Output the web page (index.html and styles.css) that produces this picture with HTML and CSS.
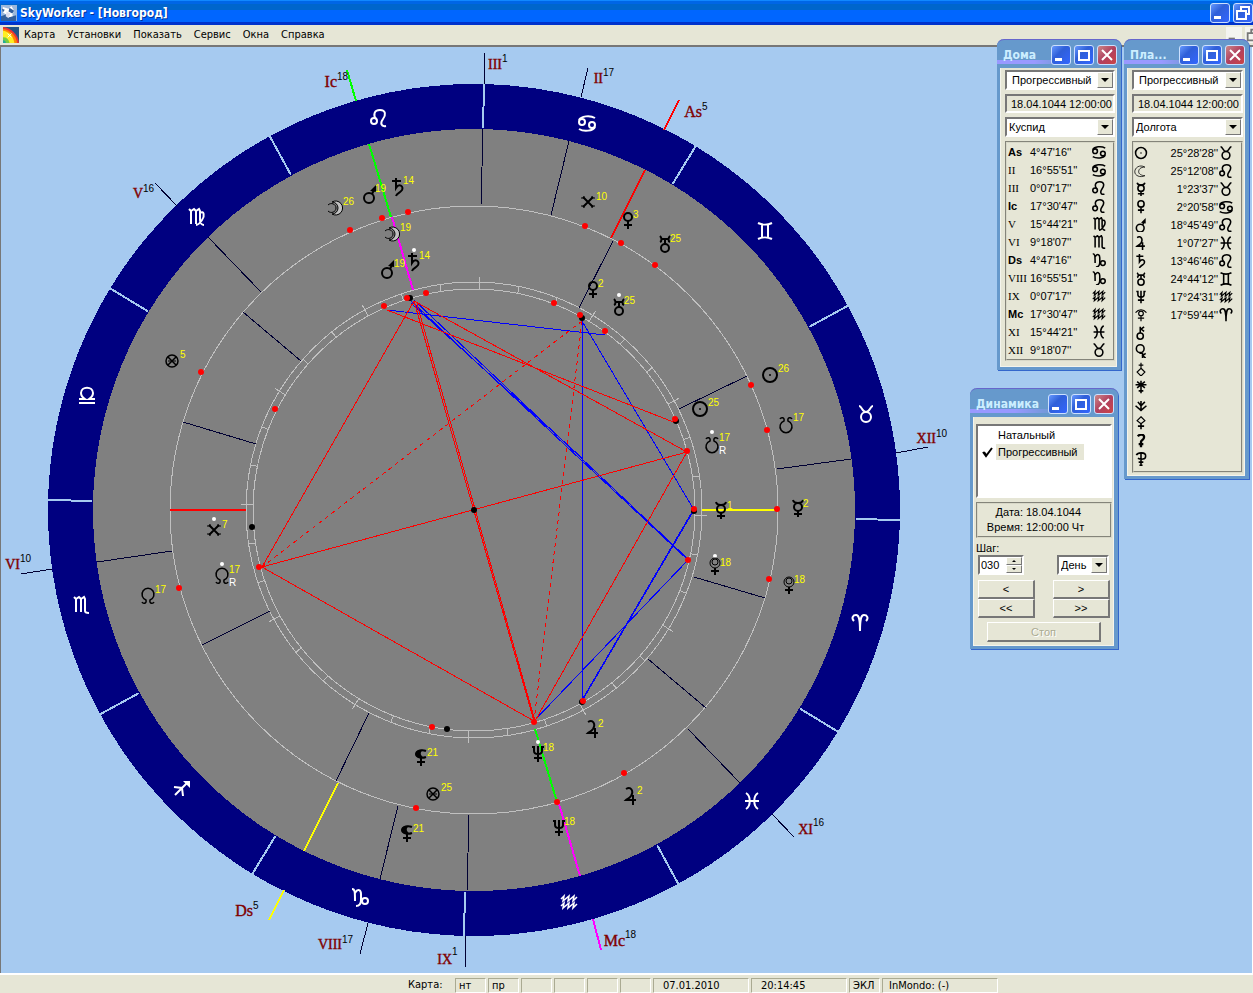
FILE: index.html
```html
<!DOCTYPE html>
<html lang="ru">
<head>
<meta charset="utf-8">
<title>SkyWorker - [Новгород]</title>
<link rel="stylesheet" href="styles.css">
</head>
<body>
<svg class="sprite" aria-hidden="true">
<defs>
<g id="aries"><path d="M-6-2C-9-5-7-8-4-8-1-8 0-4 0 8 0-4 1-8 4-8 7-8 9-5 6-2"/></g>
<g id="taurus"><circle cy="3" r="5"/><path d="M-7-8C-4-8-4-2 0-2S4-8 7-8"/></g>
<g id="gemini"><path d="M-7-8C-3-6 3-6 7-8M-7 8C-3 6 3 6 7 8M-3-7V7M3-7V7"/></g>
<g id="cancer"><circle cx="-5" cy="-1" r="3"/><circle cx="5" cy="2" r="3"/><path d="M-8-3C-6-7 3-8 8-5M8 4C6 8-3 9-8 6"/></g>
<g id="leo"><circle cx="-5" cy="3" r="3"/><path d="M-3 1C-6-3-5-8 1-8S7-3 4 1 2 9 7 8"/></g>
<g id="virgo"><path d="M-7-8l2 2V7M-5-6l3-2 2 2V7M0-6l3-2 1 2V3C4 6 6 8 8 8M4-4C8-7 9-1 6 3 4 6 2 8 0 8"/></g>
<g id="libra"><path d="M-8 8H8M-8 4H-2C-5 2-6 0-6-2-6-9 6-9 6-2 6 0 5 2 2 4H8"/></g>
<g id="scorpio"><path d="M-7-8l2 2V7M-5-6l3-2 2 2V7M0-6l3-2 1 2V6C4 8 6 8 8 8"/></g>
<g id="sagittarius"><path d="M-7 7L6-6M-8-1L0 0L1 8"/><path class="solid" d="M1-7H8V0z"/></g>
<g id="capricorn"><path d="M-8-8C-5-8-5-5-5 4M-5-4C-2-9 1-7 1-3V3C1 8-2 9-4 9"/><circle cx="5" cy="4" r="3"/></g>
<g id="aquarius"><path class="medium" d="M-8-3L-5-6L-6-1L0-6L-1-1L5-6L4-1L8-5M-8 4L-5 1L-6 6L0 1L-1 6L5 1L4 6L8 2"/></g>
<g id="pisces"><path d="M-6-8C-1-5-1 5-6 8M6-8C1-5 1 5 6 8M-7 0H7"/></g>
<g id="sun"><circle r="7"/><circle class="solid" r="1"/></g>
<g id="moon"><path class="crescent" d="M-3-6A7 7 0 1 1-3 6 6 6 0 0 0-3-6z"/><path class="thin" d="M-7-3C-4-6 1-4 1 0S-4 6-7 3"/></g>
<g id="moon-left"><path class="thin" d="M5-5C-2-9-8-4-8 1S-1 9 5 6M5-5C-1-5-3-2-3 1S1 6 5 6"/></g>
<g id="mercury"><circle cy="-1" r="4"/><path d="M-5-8C-4-4 4-4 5-8M0 3V9M-4 6H4"/></g>
<g id="venus"><circle cy="-4" r="4"/><path d="M0 0V8M-4 4H4"/></g>
<g id="mars"><circle cx="-1" cy="4" r="5"/><path d="M2 0L4-4"/><path class="solid" d="M6-9V-2L0-3z"/></g>
<g id="jupiter"><path d="M-5-7C0-10 3-5 0 0-2 3-4 3-5 4H5M2-1V9"/></g>
<g id="saturn"><path d="M-6-6H3M-2-9V1C1-4 6-1 4 3 2 6-1 6-2 9"/></g>
<g id="uranus"><circle cy="4" r="4"/><path d="M0 0V-6M-5-8C-3-6-3-3-5-2M5-8C3-6 3-3 5-2M-4-5H4"/></g>
<g id="neptune"><path d="M-4-8V-3C-4 1 4 1 4-3V-8M0-8V8M-4 4H4M-6-7h3M3-7h3"/></g>
<g id="pluto"><circle class="thin" cy="-3" r="5"/><circle class="thin" cy="-4" r="3"/><path d="M0 2V9M-4 5H4"/></g>
<g id="pluto-small"><circle class="medium" cy="-2" r="3"/><path class="medium" d="M-7-3C-3-8 3-8 7-3M0 1V8M-4 4H4"/></g>
<g id="north-node"><path class="medium" d="M-6 6C-5 8-1 8-2 4A6 6 0 1 1 2 4C1 8 5 8 6 6"/></g>
<g id="south-node"><path class="medium" d="M-6-6C-5-8-1-8-2-4A6 6 0 1 0 2-4C1-8 5-8 6-6"/></g>
<g id="cross"><path d="M-5-5L5 5M5-5L-5 5"/><path class="thin" d="M-7-4H-4V-6M7-4H4V-6M-7 4H-4V6M7 4H4V6"/></g>
<g id="fortune"><circle class="medium" r="6"/><path class="medium" d="M-4-4L4 4M4-4L-4 4"/><path class="thin" d="M-4 0H4"/></g>
<g id="lilith"><path d="M5-7C0-9-5-7-5-4S0 1 5-1"/><path class="solid" d="M2-8C-3-9-6-6-5-3S-1 1 2-1C-1-3-1-6 2-8z"/><path d="M0 0V8M-4 4H4"/></g>
<g id="chiron"><circle cx="-1" cy="4" r="4"/><path d="M-1 0V-8M4-8L0-5L4-2"/></g>
<g id="proserpina"><circle cx="-1" cy="-3" r="5"/><path d="M-2 3H2V9M6 3L2 6L6 9"/></g>
<g id="vulcan"><path class="medium" d="M0-1L5 4L0 9L-5 4zM0-1V-8M-3-5H3"/></g>
<g id="juno"><path d="M-5-7L5 1M5-7L-5 1M-7-3H7M0-8V8M-3 5H3"/></g>
<g id="vesta"><path d="M-7 1L0 7L7 1M-4-4L0 1L5-4M0-5V6"/></g>
<g id="pallas"><path class="medium" d="M0-8L5-3L0 1L-5-3z"/><path d="M0 1V8M-4 4H4"/></g>
<g id="ceres"><path class="heavy" d="M-4-6C-2-9 4-9 4-5S0-1 0 1V8M-3 4H3"/></g>
<g id="isis"><path d="M-6-5C-4-9 6-9 6-4S0 1-4-1M0-7V9M-3 4H3M-2 8H2"/></g>
<g id="min"><path class="solid" d="M-6 3H1V6H-6z"/></g>
<g id="max"><path d="M-5-4H5V5H-5z"/></g>
<g id="close"><path d="M-5-5L5 5M5-5L-5 5"/></g>
<g id="restore"><path d="M-2-2V-6H6V1H3M-6-2H3V6H-6z"/></g>
</defs>
</svg>

<div class="app">
<header class="titlebar">
  <svg class="app-icon" viewBox="0 0 17 17" aria-hidden="true"><path fill="#9cb8dc" d="M0 0h17v17H0z"/><path fill="#fff" d="M2 2l6 2 3-3 3 5-2 4 2 6H6l1-5-5-3z"/><path fill="#335f9c" d="M0 12l5-2 4 3 7-2v6H0zM9 3l5 3-2 3-4-2zM1 4l3 1-2 3z"/><path fill="#dde" d="M6 7l4 2-2 5-3-2z"/></svg>
  <h1>SkyWorker - [Новгород]</h1>
  <div class="app-buttons">
    <button class="cap" aria-label="Свернуть"><svg viewBox="-9 -9 18 18"><use href="#min"/></svg></button>
    <button class="cap" aria-label="Восстановить"><svg viewBox="-9 -9 18 18"><use href="#restore"/></svg></button>
  </div>
</header>
<nav class="menubar">
  <svg class="doc-icon" viewBox="0 0 17 17" aria-hidden="true"><path fill="#258" d="M0 0h17v17H0z"/><path fill="#e33" d="M0 0C9 1 16 8 17 17H0z"/><path fill="#f80" d="M0 2C8 3 14 9 15 17H0z"/><path fill="#fe2" d="M0 4c7 1 11 6 12 13H0z"/><path fill="#7c4" d="M0 11c4 0 6 2 7 6H0z"/><path fill="#2a9" d="M0 14c2 0 3 1 3 3H0z"/><path stroke="#fff" d="M5 7l4 4M9 7l-4 4"/></svg>
  <button>Карта</button><button>Установки</button><button>Показать</button><button>Сервис</button><button>Окна</button><button>Справка</button>
  <div class="doc-buttons">
    <button aria-label="Свернуть документ"><svg viewBox="-9 -9 18 18"><use href="#min"/></svg></button>
    <button aria-label="Восстановить документ"><svg viewBox="-9 -9 18 18"><use href="#restore"/></svg></button>
  </div>
</nav>

<main class="desk">
<svg class="chart" viewBox="0 46 1253 927" role="img" aria-label="Карта: Новгород">
  <defs>
    <path id="sep" d="M474 84V128"/>
    <path id="t" d="M474 282V289"/>
    <g id="t30"><path d="M474 277V289"/><use href="#t" transform="rotate(10 474 510)"/><use href="#t" transform="rotate(20 474 510)"/></g>
  </defs>
  <g class="rings">
    <circle class="zodiac" cx="474" cy="510" r="426"/>
    <circle class="disc" cx="474" cy="510" r="381"/>
    <g class="seps" transform="rotate(1.35 474 510)">
      <use href="#sep"/><use href="#sep" transform="rotate(30 474 510)"/><use href="#sep" transform="rotate(60 474 510)"/><use href="#sep" transform="rotate(90 474 510)"/><use href="#sep" transform="rotate(120 474 510)"/><use href="#sep" transform="rotate(150 474 510)"/><use href="#sep" transform="rotate(180 474 510)"/><use href="#sep" transform="rotate(210 474 510)"/><use href="#sep" transform="rotate(240 474 510)"/><use href="#sep" transform="rotate(270 474 510)"/><use href="#sep" transform="rotate(300 474 510)"/><use href="#sep" transform="rotate(330 474 510)"/>
    </g>
    <g class="scale">
      <circle cx="474" cy="510" r="304"/><circle cx="474" cy="510" r="228"/><circle cx="474" cy="510" r="221"/>
      <g transform="rotate(1.4 474 510)">
        <use href="#t30"/><use href="#t30" transform="rotate(30 474 510)"/><use href="#t30" transform="rotate(60 474 510)"/><use href="#t30" transform="rotate(90 474 510)"/><use href="#t30" transform="rotate(120 474 510)"/><use href="#t30" transform="rotate(150 474 510)"/><use href="#t30" transform="rotate(180 474 510)"/><use href="#t30" transform="rotate(210 474 510)"/><use href="#t30" transform="rotate(240 474 510)"/><use href="#t30" transform="rotate(270 474 510)"/><use href="#t30" transform="rotate(300 474 510)"/><use href="#t30" transform="rotate(330 474 510)"/>
      </g>
    </g>
  </g>
  <g class="cusps">
    <path d="M485 53L484 84M483 129L481 205M588 68L581 97M569 141L551 215M155 183L177 206M208 237L261 292M21 574L52 569M97 562L172 551M368 923L360 954M398 806L380 879M466 936L465 967M469 815L467 891M772 814L794 837M688 729L740 783M896 453L928 447M777 469L851 459M243 312L301 361M183 422L256 444M679 409L747 376M694 577L765 598M648 659L706 708M202 645L270 611M369 713L336 781M579 308L613 241"/>
    <path class="red" d="M664 130L679 100M645 170L611 238M170 510H246"/>
    <path class="yellow" d="M284 890L269 920M338 783L304 851M702 510H778"/>
    <path class="green" d="M347 70L356 101M369 144L391 217M535 729L557 802"/>
    <path class="magenta" d="M593 919L601 950M559 804L580 876M392 217L413 290"/>
  </g>
  <g class="aspects">
    <path class="blue" d="M387 310L605 335M582 321V701M582 321L694 510L582 701M411 301L688 560M414 300L690 561M411 303L582 458M692 512L582 700M688 560L534 721"/>
    <path class="red" d="M262 567L414 301L534 721zM262 567L687 452L414 301M417 304L535 721L687 452M387 310L676 423"/>
    <path class="red dashed" d="M582 321L262 567M582 321L534 721"/>
  </g>
  <g class="dots">
    <g><circle cx="410" cy="298" r="3"/><circle cx="582" cy="318" r="3"/><circle cx="676" cy="421" r="3"/><circle cx="252" cy="527" r="3"/><circle cx="447" cy="729" r="3"/><circle cx="582" cy="702" r="3"/><circle cx="694" cy="511" r="3"/><circle cx="474" cy="510" r="3"/></g>
    <g class="natal"><circle cx="350" cy="230" r="3"/><circle cx="382" cy="218" r="3"/><circle cx="408" cy="212" r="3"/><circle cx="585" cy="226" r="3"/><circle cx="621" cy="243" r="3"/><circle cx="655" cy="265" r="3"/><circle cx="384" cy="306" r="3"/><circle cx="407" cy="298" r="3"/><circle cx="426" cy="293" r="3"/><circle cx="554" cy="303" r="3"/><circle cx="580" cy="315" r="3"/><circle cx="605" cy="331" r="3"/><circle cx="751" cy="385" r="3"/><circle cx="767" cy="430" r="3"/><circle cx="675" cy="419" r="3"/><circle cx="687" cy="451" r="3"/><circle cx="201" cy="372" r="3"/><circle cx="275" cy="409" r="3"/><circle cx="179" cy="588" r="3"/><circle cx="259" cy="567" r="3"/><circle cx="432" cy="727" r="3"/><circle cx="416" cy="808" r="3"/><circle cx="534" cy="722" r="3"/><circle cx="583" cy="701" r="3"/><circle cx="557" cy="802" r="3"/><circle cx="624" cy="773" r="3"/><circle cx="694" cy="509" r="3"/><circle cx="777" cy="509" r="3"/><circle cx="688" cy="560" r="3"/><circle cx="769" cy="579" r="3"/></g>
    <g class="marks"><circle cx="414" cy="250" r="2"/><circle cx="619" cy="295" r="2"/><circle cx="712" cy="432" r="2"/><circle cx="715" cy="556" r="2"/><circle cx="214" cy="519" r="2"/><circle cx="222" cy="564" r="2"/><circle cx="538" cy="742" r="2"/></g>
  </g>
  <g class="signs">
    <use href="#leo" x="379" y="118"/><use href="#cancer" x="587" y="123"/><use href="#gemini" x="765" y="231"/><use href="#taurus" x="866" y="414"/><use href="#aries" x="860" y="623"/><use href="#pisces" x="752" y="801"/><use href="#aquarius" x="569" y="902"/><use href="#capricorn" x="360" y="897"/><use href="#sagittarius" x="182" y="788"/><use href="#scorpio" x="81" y="605"/><use href="#libra" x="87" y="395"/><use href="#virgo" x="196" y="217"/>
  </g>
  <g class="planets">
    <use href="#moon" x="335" y="208"/><use href="#mars" x="370" y="194"/><use href="#saturn" x="398" y="187"/><use href="#cross" x="588" y="202"/><use href="#venus" x="628" y="221"/><use href="#uranus" x="665" y="244"/>
    <use href="#moon" x="392" y="234"/><use href="#saturn" x="414" y="262"/><use href="#mars" x="388" y="269"/><use href="#venus" x="593" y="290"/><use href="#uranus" x="619" y="307"/>
    <use href="#sun" x="770" y="375"/><use href="#sun" x="700" y="409"/><use href="#south-node" x="786" y="425"/><use href="#south-node" x="712" y="445"/>
    <use href="#mercury" x="721" y="510"/><use href="#mercury" x="798" y="508"/><use href="#pluto" x="715" y="566"/><use href="#pluto" x="789" y="585"/>
    <use href="#fortune" x="172" y="361"/><use href="#cross" x="214" y="530"/><use href="#north-node" x="222" y="576"/><use href="#north-node" x="148" y="596"/>
    <use href="#lilith" x="421" y="758"/><use href="#lilith" x="407" y="834"/><use href="#fortune" x="433" y="794"/><use href="#neptune" x="538" y="754"/><use href="#neptune" x="559" y="828"/><use href="#jupiter" x="593" y="729"/><use href="#jupiter" x="631" y="796"/>
  </g>
  <g class="degrees">
    <text x="343" y="205">26</text><text x="375" y="192">19</text><text x="403" y="184">14</text><text x="596" y="200">10</text><text x="633" y="218">3</text><text x="670" y="242">25</text>
    <text x="400" y="231">19</text><text x="419" y="259">14</text><text x="394" y="267">19</text><text x="598" y="287">2</text><text x="624" y="304">25</text>
    <text x="778" y="372">26</text><text x="708" y="406">25</text><text x="793" y="421">17</text><text x="719" y="441">17</text>
    <text x="727" y="509">1</text><text x="803" y="507">2</text><text x="720" y="566">18</text><text x="794" y="583">18</text>
    <text x="180" y="358">5</text><text x="222" y="528">7</text><text x="229" y="573">17</text><text x="155" y="593">17</text>
    <text x="427" y="756">21</text><text x="413" y="832">21</text><text x="441" y="791">25</text><text x="543" y="751">18</text><text x="564" y="825">18</text><text x="598" y="727">2</text><text x="637" y="794">2</text>
    <text class="retro" x="719" y="454">R</text><text class="retro" x="229" y="586">R</text>
  </g>
  <g class="houses">
    <text x="502" y="69">III</text><text x="603" y="83">II</text><text class="axis" x="702" y="117">As</text><text class="axis" x="337" y="87">Ic</text><text x="143" y="198">V</text><text x="20" y="569">VI</text><text x="936" y="443">XII</text><text x="813" y="834">XI</text><text class="axis" x="625" y="946">Mc</text><text x="452" y="964">IX</text><text x="342" y="949">VIII</text><text class="axis" x="253" y="916">Ds</text>
  </g>
  <g class="house-degrees">
    <text x="502" y="62">1</text><text x="603" y="76">17</text><text x="702" y="110">5</text><text x="337" y="80">18</text><text x="143" y="192">16</text><text x="20" y="562">10</text><text x="936" y="437">10</text><text x="813" y="826">16</text><text x="625" y="938">18</text><text x="452" y="955">1</text><text x="342" y="943">17</text><text x="253" y="909">5</text>
  </g>
</svg>

<section class="win win-houses">
  <header><h2>Дома</h2><button class="cap" aria-label="Свернуть"><svg viewBox="-9 -9 18 18"><use href="#min"/></svg></button><button class="cap" aria-label="Развернуть"><svg viewBox="-9 -9 18 18"><use href="#max"/></svg></button><button class="cap cap-close" aria-label="Закрыть"><svg viewBox="-9 -9 18 18"><use href="#close"/></svg></button></header>
  <div class="win-body">
    <div class="combo indent"><select aria-label="Карта домов"><option>Прогрессивный</option><option>Натальный</option></select><i class="arrow"></i></div>
    <div class="stamp">18.04.1044 12:00:00</div>
    <div class="combo"><select aria-label="Показатель домов"><option>Куспид</option></select><i class="arrow"></i></div>
    <div class="panel">
    <table class="cusp-table">
      <tr><th class="axis">As</th><td>4°47'16''</td><td><svg class="glyph" viewBox="-9 -9 18 18"><use href="#cancer"/></svg></td></tr>
      <tr><th>II</th><td>16°55'51''</td><td><svg class="glyph" viewBox="-9 -9 18 18"><use href="#cancer"/></svg></td></tr>
      <tr><th>III</th><td>0°07'17''</td><td><svg class="glyph" viewBox="-9 -9 18 18"><use href="#leo"/></svg></td></tr>
      <tr><th class="axis">Ic</th><td>17°30'47''</td><td><svg class="glyph" viewBox="-9 -9 18 18"><use href="#leo"/></svg></td></tr>
      <tr><th>V</th><td>15°44'21''</td><td><svg class="glyph" viewBox="-9 -9 18 18"><use href="#virgo"/></svg></td></tr>
      <tr><th>VI</th><td>9°18'07''</td><td><svg class="glyph" viewBox="-9 -9 18 18"><use href="#scorpio"/></svg></td></tr>
      <tr><th class="axis">Ds</th><td>4°47'16''</td><td><svg class="glyph" viewBox="-9 -9 18 18"><use href="#capricorn"/></svg></td></tr>
      <tr><th>VIII</th><td>16°55'51''</td><td><svg class="glyph" viewBox="-9 -9 18 18"><use href="#capricorn"/></svg></td></tr>
      <tr><th>IX</th><td>0°07'17''</td><td><svg class="glyph" viewBox="-9 -9 18 18"><use href="#aquarius"/></svg></td></tr>
      <tr><th class="axis">Mc</th><td>17°30'47''</td><td><svg class="glyph" viewBox="-9 -9 18 18"><use href="#aquarius"/></svg></td></tr>
      <tr><th>XI</th><td>15°44'21''</td><td><svg class="glyph" viewBox="-9 -9 18 18"><use href="#pisces"/></svg></td></tr>
      <tr><th>XII</th><td>9°18'07''</td><td><svg class="glyph" viewBox="-9 -9 18 18"><use href="#taurus"/></svg></td></tr>
    </table>
    </div>
  </div>
</section>

<section class="win win-planets">
  <header><h2>Пла...</h2><button class="cap" aria-label="Свернуть"><svg viewBox="-9 -9 18 18"><use href="#min"/></svg></button><button class="cap" aria-label="Развернуть"><svg viewBox="-9 -9 18 18"><use href="#max"/></svg></button><button class="cap cap-close" aria-label="Закрыть"><svg viewBox="-9 -9 18 18"><use href="#close"/></svg></button></header>
  <div class="win-body">
    <div class="combo indent"><select aria-label="Карта планет"><option>Прогрессивный</option><option>Натальный</option></select><i class="arrow"></i></div>
    <div class="stamp">18.04.1044 12:00:00</div>
    <div class="combo"><select aria-label="Показатель планет"><option>Долгота</option></select><i class="arrow"></i></div>
    <div class="panel">
    <table class="planet-table">
      <tr><th><svg class="glyph" viewBox="-9 -9 18 18"><use href="#sun"/></svg></th><td>25°28'28''</td><td><svg class="glyph" viewBox="-9 -9 18 18"><use href="#taurus"/></svg></td></tr>
      <tr><th><svg class="glyph" viewBox="-9 -9 18 18"><use href="#moon-left"/></svg></th><td>25°12'08''</td><td><svg class="glyph" viewBox="-9 -9 18 18"><use href="#leo"/></svg></td></tr>
      <tr><th><svg class="glyph" viewBox="-9 -9 18 18"><use href="#mercury"/></svg></th><td>1°23'37''</td><td><svg class="glyph" viewBox="-9 -9 18 18"><use href="#taurus"/></svg></td></tr>
      <tr><th><svg class="glyph" viewBox="-9 -9 18 18"><use href="#venus"/></svg></th><td>2°20'58''</td><td><svg class="glyph" viewBox="-9 -9 18 18"><use href="#cancer"/></svg></td></tr>
      <tr><th><svg class="glyph" viewBox="-9 -9 18 18"><use href="#mars"/></svg></th><td>18°45'49''</td><td><svg class="glyph" viewBox="-9 -9 18 18"><use href="#leo"/></svg></td></tr>
      <tr><th><svg class="glyph" viewBox="-9 -9 18 18"><use href="#jupiter"/></svg></th><td>1°07'27''</td><td><svg class="glyph" viewBox="-9 -9 18 18"><use href="#pisces"/></svg></td></tr>
      <tr><th><svg class="glyph" viewBox="-9 -9 18 18"><use href="#saturn"/></svg></th><td>13°46'46''</td><td><svg class="glyph" viewBox="-9 -9 18 18"><use href="#leo"/></svg></td></tr>
      <tr><th><svg class="glyph" viewBox="-9 -9 18 18"><use href="#uranus"/></svg></th><td>24°44'12''</td><td><svg class="glyph" viewBox="-9 -9 18 18"><use href="#gemini"/></svg></td></tr>
      <tr><th><svg class="glyph" viewBox="-9 -9 18 18"><use href="#neptune"/></svg></th><td>17°24'31''</td><td><svg class="glyph" viewBox="-9 -9 18 18"><use href="#aquarius"/></svg></td></tr>
      <tr><th><svg class="glyph" viewBox="-9 -9 18 18"><use href="#pluto-small"/></svg></th><td>17°59'44''</td><td><svg class="glyph" viewBox="-9 -9 18 18"><use href="#aries"/></svg></td></tr>
      <tr><th><svg class="glyph" viewBox="-9 -9 18 18"><use href="#chiron"/></svg></th><td></td><td></td></tr>
      <tr><th><svg class="glyph" viewBox="-9 -9 18 18"><use href="#proserpina"/></svg></th><td></td><td></td></tr>
      <tr><th><svg class="glyph" viewBox="-9 -9 18 18"><use href="#vulcan"/></svg></th><td></td><td></td></tr>
      <tr><th><svg class="glyph" viewBox="-9 -9 18 18"><use href="#juno"/></svg></th><td></td><td></td></tr>
      <tr><th><svg class="glyph" viewBox="-9 -9 18 18"><use href="#vesta"/></svg></th><td></td><td></td></tr>
      <tr><th><svg class="glyph" viewBox="-9 -9 18 18"><use href="#pallas"/></svg></th><td></td><td></td></tr>
      <tr><th><svg class="glyph" viewBox="-9 -9 18 18"><use href="#ceres"/></svg></th><td></td><td></td></tr>
      <tr><th><svg class="glyph" viewBox="-9 -9 18 18"><use href="#isis"/></svg></th><td></td><td></td></tr>
    </table>
    </div>
  </div>
</section>

<section class="win win-dynamics">
  <header><h2>Динамика</h2><button class="cap" aria-label="Свернуть"><svg viewBox="-9 -9 18 18"><use href="#min"/></svg></button><button class="cap" aria-label="Развернуть"><svg viewBox="-9 -9 18 18"><use href="#max"/></svg></button><button class="cap cap-close" aria-label="Закрыть"><svg viewBox="-9 -9 18 18"><use href="#close"/></svg></button></header>
  <div class="win-body">
    <ul class="listbox">
      <li><span></span><b>Натальный</b></li>
      <li class="current"><span><svg viewBox="0 0 12 12"><path d="M1 6L4 10L10 2M2 6L4 9"/></svg></span><b>Прогрессивный</b></li>
    </ul>
    <dl class="when"><dt>Дата:</dt><dd>18.04.1044</dd><dt>Время:</dt><dd>12:00:00 Чт</dd></dl>
    <label class="step-label" for="step">Шаг:</label>
    <div class="step-row">
      <div class="spin"><input id="step" type="text" value="030"><div class="spin-buttons"><button class="push" aria-label="Больше"><i class="up"></i></button><button class="push" aria-label="Меньше"><i class="down"></i></button></div></div>
      <div class="combo unit"><select aria-label="Единица шага"><option>День</option></select><i class="arrow"></i></div>
    </div>
    <div class="moves"><button class="push">&lt;</button><button class="push">&gt;</button><button class="push">&lt;&lt;</button><button class="push">&gt;&gt;</button></div>
    <button class="push stop" disabled>Стоп</button>
  </div>
</section>
</main>

<footer class="status">
  <span class="caption">Карта:</span>
  <span class="cell">нт</span><span class="cell">пр</span><span class="cell"></span><span class="cell"></span><span class="cell"></span><span class="cell"></span>
  <span class="cell date">07.01.2010</span><span class="cell date">20:14:45</span><span class="cell">ЭКЛ</span><span class="cell mode">InMondo: (-)</span>
</footer>
</div>
</body>
</html>
```
FILE: styles.css
```css
* { box-sizing: border-box; }
body { margin: 0; color: #000; font: 11px/14px "DejaVu Sans Condensed", "DejaVu Sans", sans-serif; }
button, select, input { margin: 0; padding: 0; border: 0; border-radius: 0; color: inherit; font: inherit; }
h1, h2, ul, dl, dd { margin: 0; padding: 0; }
.sprite { position: absolute; width: 0; height: 0; }
.app { display: flex; flex-direction: column; min-height: 100vh; background: #e6e6d6; overflow: hidden; }

/* Title bar and menu */
.titlebar { display: flex; align-items: center; height: 25px; padding-left: 1px; background: linear-gradient(#1188ff 0 1px, #0066e6 1px 4px, #0066cc 4px 10px, #0066ff 10px 22px, #0033cc 22px); color: #fff; }
.titlebar h1 { flex: 1; margin-left: 3px; font-size: 12px; line-height: 16px; font-weight: bold; text-shadow: 1px 1px #003399; }
.app-icon { width: 16px; height: 16px; }
.app-buttons { display: flex; gap: 3px; }
.cap { display: block; flex: none; width: 20px; height: 20px; border: 1px solid #cce0ff; border-radius: 3px; background: linear-gradient(135deg, #6699ff, #2f5fd8 40%, #3366ff); color: #fff; }
.cap svg { display: block; width: 18px; height: 18px; fill: none; stroke: currentColor; stroke-width: 2; }
.solid { fill: currentColor; stroke: none; }
.menubar { display: flex; align-items: center; height: 21px; padding-left: 3px; border-bottom: 1px solid #777; }
.menubar > button { margin-right: 12px; background: none; }
.doc-icon { width: 16px; height: 16px; margin-right: 5px; }
.doc-buttons { display: flex; gap: 3px; margin-left: auto; margin-right: -8px; }
.doc-buttons button { width: 16px; height: 16px; background: #f4f4f0; color: #777; }
.doc-buttons svg { display: block; width: 16px; height: 16px; fill: none; stroke: currentColor; stroke-width: 2; }

/* Chart */
.desk { position: relative; flex: 1; min-height: 0; display: flex; background: #a6caf0; box-shadow: inset 1px 1px #777, inset -1px 0 #fff; }
.chart { display: block; width: 100%; height: auto; }
.rings, .cusps, .aspects { shape-rendering: crispEdges; fill: none; }
.zodiac { fill: #000080; }
.disc { fill: #808080; }
.seps { stroke: #a6caf0; stroke-width: 2; }
.scale { stroke: #c0c0c0; stroke-width: 1; }
.cusps { stroke: #000033; stroke-width: 1; }
.cusps .red, .cusps .yellow, .cusps .green, .cusps .magenta { stroke-width: 2; }
.red { stroke: #f00; }
.yellow { stroke: #ff0; }
.green { stroke: #0f0; }
.magenta { stroke: #f0f; }
.blue { stroke: #00f; }
.dashed { stroke-dasharray: 4 4; }
.natal { fill: #f00; }
.marks { fill: #fff; }
.signs, .planets, .glyph { fill: none; stroke: currentColor; stroke-width: 2; }
.signs { color: #fff; }
.thin { stroke-width: 1; }
.medium { stroke-width: 1.5; }
.heavy { stroke-width: 3; }
.crescent { fill: #c0c0c0; stroke-width: 1; }
.degrees, .house-degrees { font: 10px "Liberation Sans Narrow", "Liberation Sans", sans-serif; }
.degrees { fill: #ff0; }
.degrees .retro { fill: #fff; }
.houses { fill: #800000; text-anchor: end; font: 14px "Liberation Serif", serif; stroke: #800000; stroke-width: 0.4; }
.houses .axis { font-size: 16px; }

/* Tool windows */
.win { position: absolute; border: solid #6699cc; border-width: 0 4px 3px 3px; border-radius: 7px 7px 0 0; background: #e6e6d6; box-shadow: inset 0 0 0 1px #f4f4ec, 1px 1px #3366cc; font: 11px/14px "Liberation Sans", Arial, sans-serif; }
.win-houses { top: -7px; right: 132px; width: 124px; }
.win-planets { top: -7px; right: 4px; width: 125px; }
.win-dynamics { top: 342px; right: 135px; width: 148px; }
.win header { display: flex; align-items: center; gap: 3px; height: 29px; margin: 0 -4px 0 -3px; padding: 2px 4px 0 6px; border-radius: 7px 7px 0 0; border-top: 1px solid #6666cc; background: linear-gradient(90deg, #9999ff, #9999ff 30%, transparent 60%) 0 20px / 100% 4px no-repeat, #6699cc; }
.win h2 { flex: 1; font: bold 12px/16px "DejaVu Sans Condensed", "DejaVu Sans", sans-serif; color: #cceeff; }
.cap-close { background: linear-gradient(135deg, #cc8888, #b04060 50%, #cc4444); }
.win-body { display: flex; flex-direction: column; gap: 4px; padding: 2px 2px 6px 5px; }
.win-planets .win-body { padding-bottom: 3px; }
.combo { position: relative; height: 20px; border: 2px solid; border-color: #777 #fff #fff #777; }
.combo select { appearance: none; display: block; width: 100%; height: 16px; padding-left: 2px; background: #fff; }
.combo.indent select { padding-left: 5px; }
.arrow { position: absolute; top: 0; right: 0; width: 16px; height: 16px; border: 1px solid; border-color: #fff #777 #777 #fff; background: #e6e6d6; pointer-events: none; }
.arrow::before { content: ""; position: absolute; top: 5px; left: 3px; border: 4px solid transparent; border-top-color: #000; border-bottom: 0; }
.stamp { height: 19px; padding: 1px 0 0 4px; border: 2px solid; border-color: #777 #fff #fff #777; white-space: nowrap; }
.panel { border: 2px groove #d8d8c8; }
.win-planets .panel { padding: 1px 0 3px; }
table { width: 100%; border-collapse: collapse; table-layout: fixed; }
tr { height: 18px; }
th, td { padding: 0; font-weight: normal; text-align: left; white-space: nowrap; vertical-align: middle; }
.glyph { display: block; width: 14px; height: 14px; margin: auto; }
.cusp-table th { width: 23px; padding-left: 1px; font-family: "Liberation Serif", serif; }
.cusp-table .axis { font: bold 11px/14px "Liberation Sans", sans-serif; }
.cusp-table td:last-child { width: 28px; }
.planet-table th { width: 14px; }
.planet-table td { text-align: right; }
.planet-table td:last-child { width: 23px; padding-right: 7px; }

.win-dynamics .win-body { gap: 0; padding: 7px 2px 4px 3px; }
.listbox { height: 74px; padding: 0 2px; border: 2px solid; border-color: #777 #fff #fff #777; background: #fff; list-style: none; }
.listbox li { display: flex; align-items: center; height: 17px; }
.listbox span { width: 16px; }
.listbox span svg { display: block; width: 12px; height: 12px; margin-left: 2px; fill: none; stroke: #000; stroke-width: 2; }
.listbox b { padding: 1px 6px 1px 2px; font-weight: normal; }
.listbox .current b { background: #e6e6d6; }
.when { display: grid; grid-template-columns: 44px 1fr; column-gap: 3px; line-height: 15px; margin-top: 4px; padding: 1px; border: 2px groove #d8d8c8; }
.when dt { text-align: right; }
.step-label { margin-top: 3px; }
.step-row { display: flex; justify-content: space-between; padding: 0 3px 0 2px; }
.spin { display: flex; width: 46px; height: 20px; border: 2px solid; border-color: #777 #fff #fff #777; background: #fff; }
.spin input { width: 26px; min-width: 0; padding-left: 1px; background: none; }
.spin-buttons { display: grid; width: 16px; grid-template-rows: 8px 8px; }
.push { border: 1px solid; border-color: #fff #777 #777 #fff; background: #e6e6d6; }
.spin-buttons .push { display: grid; place-items: center; }
.up, .down { border: 2px solid transparent; }
.up { border-top: 0; border-bottom-color: #000; }
.down { border-bottom: 0; border-top-color: #000; }
.unit { width: 52px; }
.moves { display: grid; grid-template-columns: 57px 57px; justify-content: space-between; margin-top: 5px; padding: 0 2px; }
.moves .push, .stop { height: 19px; border-width: 1px 2px 2px 1px; }
.stop { width: 114px; height: 20px; margin: 4px 0 0 11px; }
.stop:disabled { color: #aaaa92; text-shadow: 1px 1px #fff; }

/* Status bar */
.status { display: flex; gap: 2px; height: 20px; padding: 3px 0 0 408px; border-top: 2px solid #fff; line-height: 14px; white-space: nowrap; }
.caption { width: 45px; }
.cell { width: 31px; padding-left: 3px; border: solid; border-width: 1px; border-color: #aaaa92 #fff #fff #aaaa92; }
.date { width: 96px; padding-left: 9px; }
.mode { width: 116px; padding-left: 6px; }
```
